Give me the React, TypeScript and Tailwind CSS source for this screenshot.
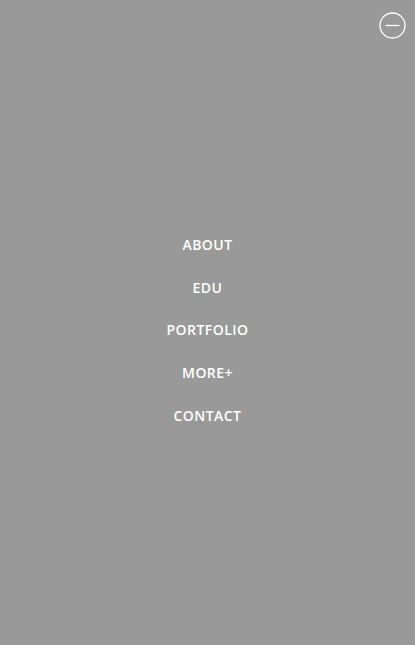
import React from 'react'

const links = ['ABOUT', 'EDU', 'PORTFOLIO', 'MORE+', 'CONTACT']

export default function App() {
  return (
    <div className="relative h-[645px] w-full bg-[#999999] font-['Open_Sans',sans-serif]">
      <button className="absolute right-[9px] top-[12px] text-white" aria-label="Close menu">
        <svg width="27" height="27" viewBox="0 0 27 27" fill="none" stroke="currentColor" strokeWidth="1.3">
          <circle cx="13.5" cy="13.5" r="12.5" />
          <line x1="6.5" y1="13.5" x2="20.5" y2="13.5" />
        </svg>
      </button>

      <nav className="flex flex-col items-center pt-[223px]">
        {links.map((l) => (
          <a key={l} href="#" className="flex h-[42.75px] items-center text-[14px] font-semibold tracking-[0.45px] text-white">
            {l}
          </a>
        ))}
      </nav>
    </div>
  )
}
